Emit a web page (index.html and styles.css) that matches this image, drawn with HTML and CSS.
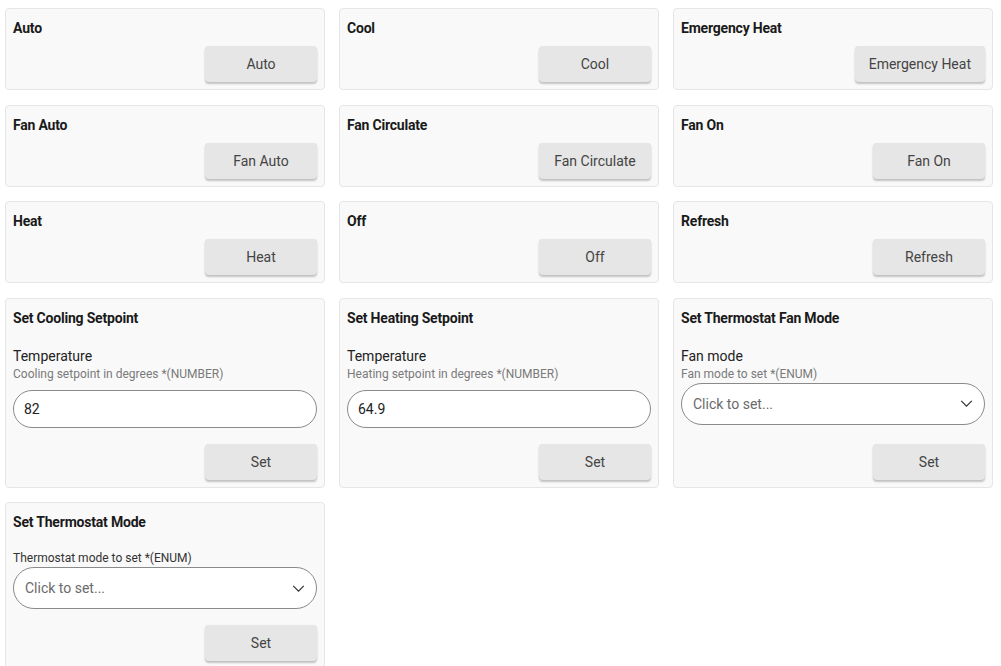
FILE: index.html
```html
<!DOCTYPE html>
<html>
<head>
<meta charset="utf-8">
<link rel="stylesheet" href="styles.css">
</head>
<body>
<div class="grid">
  <div class="card"><div class="title">Auto</div><div class="actions"><button class="btn">Auto</button></div></div>
  <div class="card"><div class="title">Cool</div><div class="actions"><button class="btn">Cool</button></div></div>
  <div class="card"><div class="title">Emergency Heat</div><div class="actions"><button class="btn">Emergency Heat</button></div></div>

  <div class="card"><div class="title">Fan Auto</div><div class="actions"><button class="btn">Fan Auto</button></div></div>
  <div class="card"><div class="title">Fan Circulate</div><div class="actions"><button class="btn">Fan Circulate</button></div></div>
  <div class="card"><div class="title">Fan On</div><div class="actions"><button class="btn">Fan On</button></div></div>

  <div class="card"><div class="title">Heat</div><div class="actions"><button class="btn">Heat</button></div></div>
  <div class="card"><div class="title">Off</div><div class="actions"><button class="btn">Off</button></div></div>
  <div class="card"><div class="title">Refresh</div><div class="actions"><button class="btn">Refresh</button></div></div>

  <div class="card">
    <div class="title">Set Cooling Setpoint</div>
    <div class="field">
      <div class="label">Temperature</div>
      <div class="desc">Cooling setpoint in degrees *(NUMBER)</div>
      <div class="input">82</div>
    </div>
    <div class="actions"><button class="btn">Set</button></div>
  </div>
  <div class="card">
    <div class="title">Set Heating Setpoint</div>
    <div class="field">
      <div class="label">Temperature</div>
      <div class="desc">Heating setpoint in degrees *(NUMBER)</div>
      <div class="input">64.9</div>
    </div>
    <div class="actions"><button class="btn">Set</button></div>
  </div>
  <div class="card">
    <div class="title">Set Thermostat Fan Mode</div>
    <div class="field">
      <div class="label">Fan mode</div>
      <div class="desc">Fan mode to set *(ENUM)</div>
      <div class="select"><span>Click to set...</span><svg class="chev" width="14" height="8" viewBox="0 0 14 8"><path d="M1 1l6 6 6-6" fill="none" stroke="#333" stroke-width="1.4"/></svg></div>
    </div>
    <div class="actions"><button class="btn">Set</button></div>
  </div>

  <div class="card">
    <div class="title">Set Thermostat Mode</div>
    <div class="field">
      <div class="desc dark">Thermostat mode to set *(ENUM)</div>
      <div class="select"><span>Click to set...</span><svg class="chev" width="14" height="8" viewBox="0 0 14 8"><path d="M1 1l6 6 6-6" fill="none" stroke="#333" stroke-width="1.4"/></svg></div>
    </div>
    <div class="actions"><button class="btn">Set</button></div>
  </div>
</div>
</body>
</html>
```

FILE: styles.css
```css
html, body {
  margin: 0;
  padding: 0;
  background: #fff;
  font-family: Roboto, "Liberation Sans", sans-serif;
  color: #111;
}
.grid {
  display: grid;
  grid-template-columns: repeat(3, 320px);
  column-gap: 14px;
  row-gap: 14.5px;
  padding: 8px 0 0 5px;
}
.card {
  box-sizing: border-box;
  background: #f9f9f9;
  border: 1px solid #e6e6e6;
  border-radius: 4px;
  padding: 9px 7px 7px 7px;
  display: flex;
  flex-direction: column;
}
.title {
  font-size: 14px;
  font-weight: 700;
  line-height: 20px;
  height: 20px;
  color: #1a1a1a;
  letter-spacing: -0.2px;
}
.actions {
  display: flex;
  justify-content: flex-end;
  margin-top: auto;
  padding-top: 8px;
}
.field + .actions { padding-top: 16px; }
.btn {
  min-width: 112px;
  height: 36px;
  padding: 0 14px;
  border: none;
  border-radius: 4px;
  background: #e6e6e6;
  box-shadow: 0 2px 2px rgba(0,0,0,0.22), 0 0 1px rgba(0,0,0,0.1);
  font-family: Roboto, "Liberation Sans", sans-serif;
  font-size: 14px;
  color: #444;
  cursor: pointer;
}
.field {
  margin-top: 18px;
  display: flex;
  flex-direction: column;
}
.label {
  font-size: 14px;
  line-height: 20px;
  color: #222;
}
.desc {
  font-size: 12px;
  line-height: 16px;
  color: #7a7a7a;
}
.desc.dark { color: #333; }
.input {
  box-sizing: border-box;
  margin-top: 8px;
  height: 38px;
  border: 1px solid #8a8a8a;
  border-radius: 19px;
  background: #fff;
  padding: 0 10px;
  display: flex;
  align-items: center;
  font-size: 14px;
  color: #222;
}
.select {
  box-sizing: border-box;
  margin-top: 1px;
  height: 42px;
  border: 1px solid #8a8a8a;
  border-radius: 21px;
  background: #fff;
  padding: 0 11px 0 11px;
  display: flex;
  align-items: center;
  justify-content: space-between;
  font-size: 14px;
  color: #6a6a6a;
}
.chev { width: 13px; height: 7px; }
```
